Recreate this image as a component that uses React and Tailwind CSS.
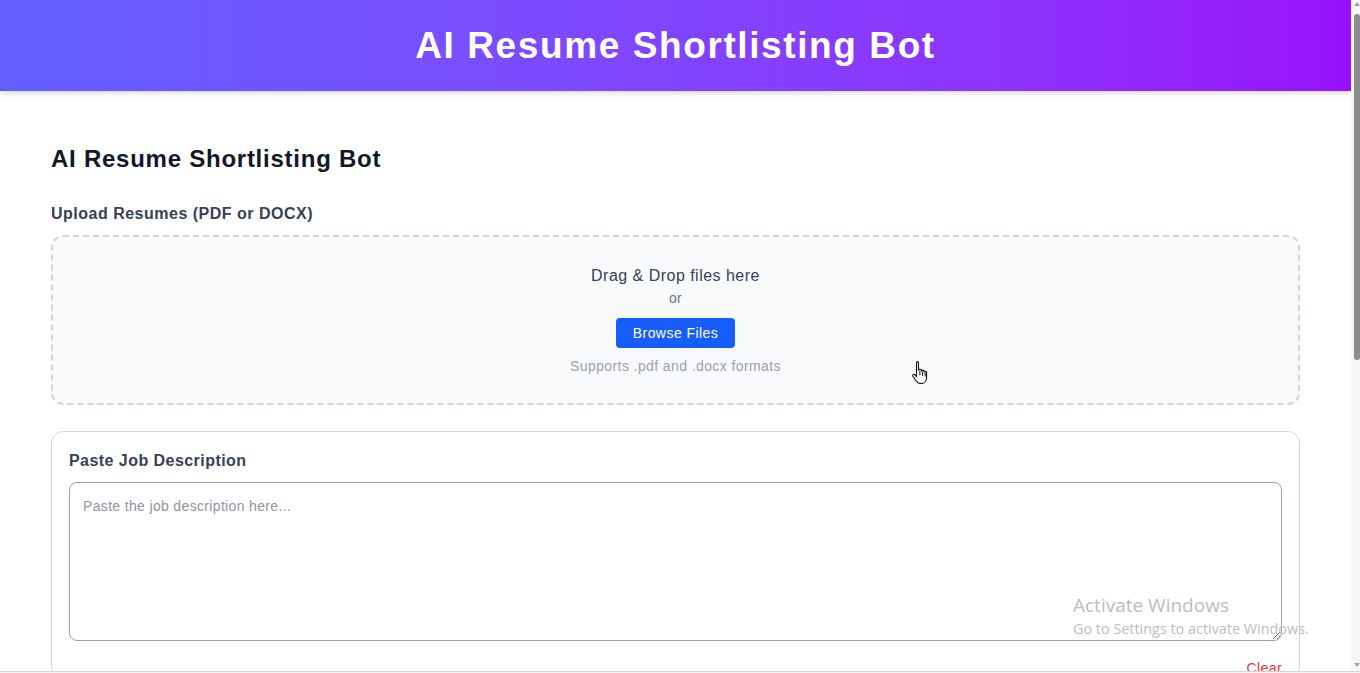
export default function App() {
  return (
    <div className="relative flex h-[673px] w-full overflow-hidden bg-white font-['Liberation_Sans',Arial,sans-serif]">
      {/* Page */}
      <div className="flex-1 overflow-hidden">
        <header className="flex h-[91px] items-center justify-center bg-gradient-to-r from-indigo-500 to-purple-600 shadow-md">
          <h1 className="text-[37px] leading-[40px] font-bold tracking-[1.6px] text-white">AI Resume Shortlisting Bot</h1>
        </header>

        <main className="px-[51px]">
          <h2 className="mt-[52px] text-2xl leading-[32px] font-bold tracking-[0.75px] text-gray-900">AI Resume Shortlisting Bot</h2>

          <p className="mt-[27px] text-base leading-6 font-bold tracking-[0.5px] text-gray-700">Upload Resumes (PDF or DOCX)</p>

          {/* Dropzone */}
          <div className="mt-[9px] flex flex-col items-center rounded-xl border-2 border-dashed border-gray-300 bg-gray-50 pt-[27px] pb-[27px]">
            <p className="text-base leading-6 tracking-[0.48px] text-gray-700">Drag &amp; Drop files here</p>
            <p className="text-sm leading-5 tracking-[0.4px] text-gray-500">or</p>
            <button className="mt-[10px] rounded bg-blue-600 px-[17px] py-[5px] text-sm leading-5 tracking-[0.45px] text-white">
              Browse Files
            </button>
            <p className="mt-2 text-sm leading-5 tracking-[0.4px] text-gray-400">Supports .pdf and .docx formats</p>
          </div>

          {/* Job description */}
          <div className="mt-[26px] rounded-xl border border-gray-300 px-[17px] pt-[17px]">
            <p className="text-base leading-6 font-bold tracking-[0.45px] text-gray-700">Paste Job Description</p>
            <textarea
              className="mt-[9px] block h-[159px] w-full rounded-lg border border-gray-400 px-[13px] pt-[13px] text-sm leading-5 tracking-[0.34px] text-gray-700 outline-none placeholder:text-[#8f95a1]"
              placeholder="Paste the job description here..."
            />
            <div className="mt-[17px] flex justify-end">
              <button className="text-sm leading-5 tracking-[0.4px] text-red-500">Clear</button>
            </div>
          </div>
        </main>
      </div>

      {/* Scrollbar */}
      <div className="relative flex w-[9px] flex-col bg-[#f7f7f7]">
        <div className="ml-[3px] mt-[2px] h-0 w-0 border-x-[3px] border-b-[4px] border-x-transparent border-b-[#a3a3a3]" />
        <div className="ml-[3px] mt-[8px] h-[346px] w-[6px] rounded-[3px] bg-[#8c8c8c]" />
        <div className="mt-auto mb-[6px] ml-[3px] h-0 w-0 border-x-[3px] border-t-[4px] border-x-transparent border-t-[#a3a3a3]" />
      </div>

      {/* Pointer cursor */}
      <svg className="absolute left-[912px] top-[360px]" width="18" height="24" viewBox="0 0 18 24">
        <path
          d="M5 1.5c.9 0 1.5.6 1.5 1.5v7.2c.2-.6.7-1 1.4-1 .8 0 1.4.6 1.4 1.4v.4c.2-.6.7-.9 1.3-.9.8 0 1.4.6 1.4 1.4v.6c.2-.5.7-.8 1.3-.8.8 0 1.3.6 1.3 1.4v4.8c0 3.6-2.4 6.1-5.6 6.1-2.3 0-3.7-1-5-2.8l-3-4.3c-.5-.7-.4-1.5.2-1.9.6-.4 1.4-.3 1.9.3l1.4 1.8V3c0-.9.6-1.5 1.5-1.5z"
          fill="#fff"
          stroke="#111"
          strokeWidth="1.1"
          strokeLinejoin="round"
        />
        <path d="M7.9 11v4M10.6 12v3.5M13.2 13v3" stroke="#111" strokeWidth="1" strokeLinecap="round" />
      </svg>

      {/* Activate Windows watermark */}
      <div className="pointer-events-none absolute left-[1073px] top-[593px] font-['Open_Sans','Noto_Sans',sans-serif] text-[#bdbdbd]">
        <p className="text-[19px] leading-[25px]">Activate Windows</p>
        <p className="text-[14.4px] leading-[22px]">Go to Settings to activate Windows.</p>
      </div>

      {/* Window bottom edge */}
      <div className="absolute bottom-0 left-0 h-[2px] w-full border-t border-gray-300 bg-gray-100" />
    </div>
  )
}
